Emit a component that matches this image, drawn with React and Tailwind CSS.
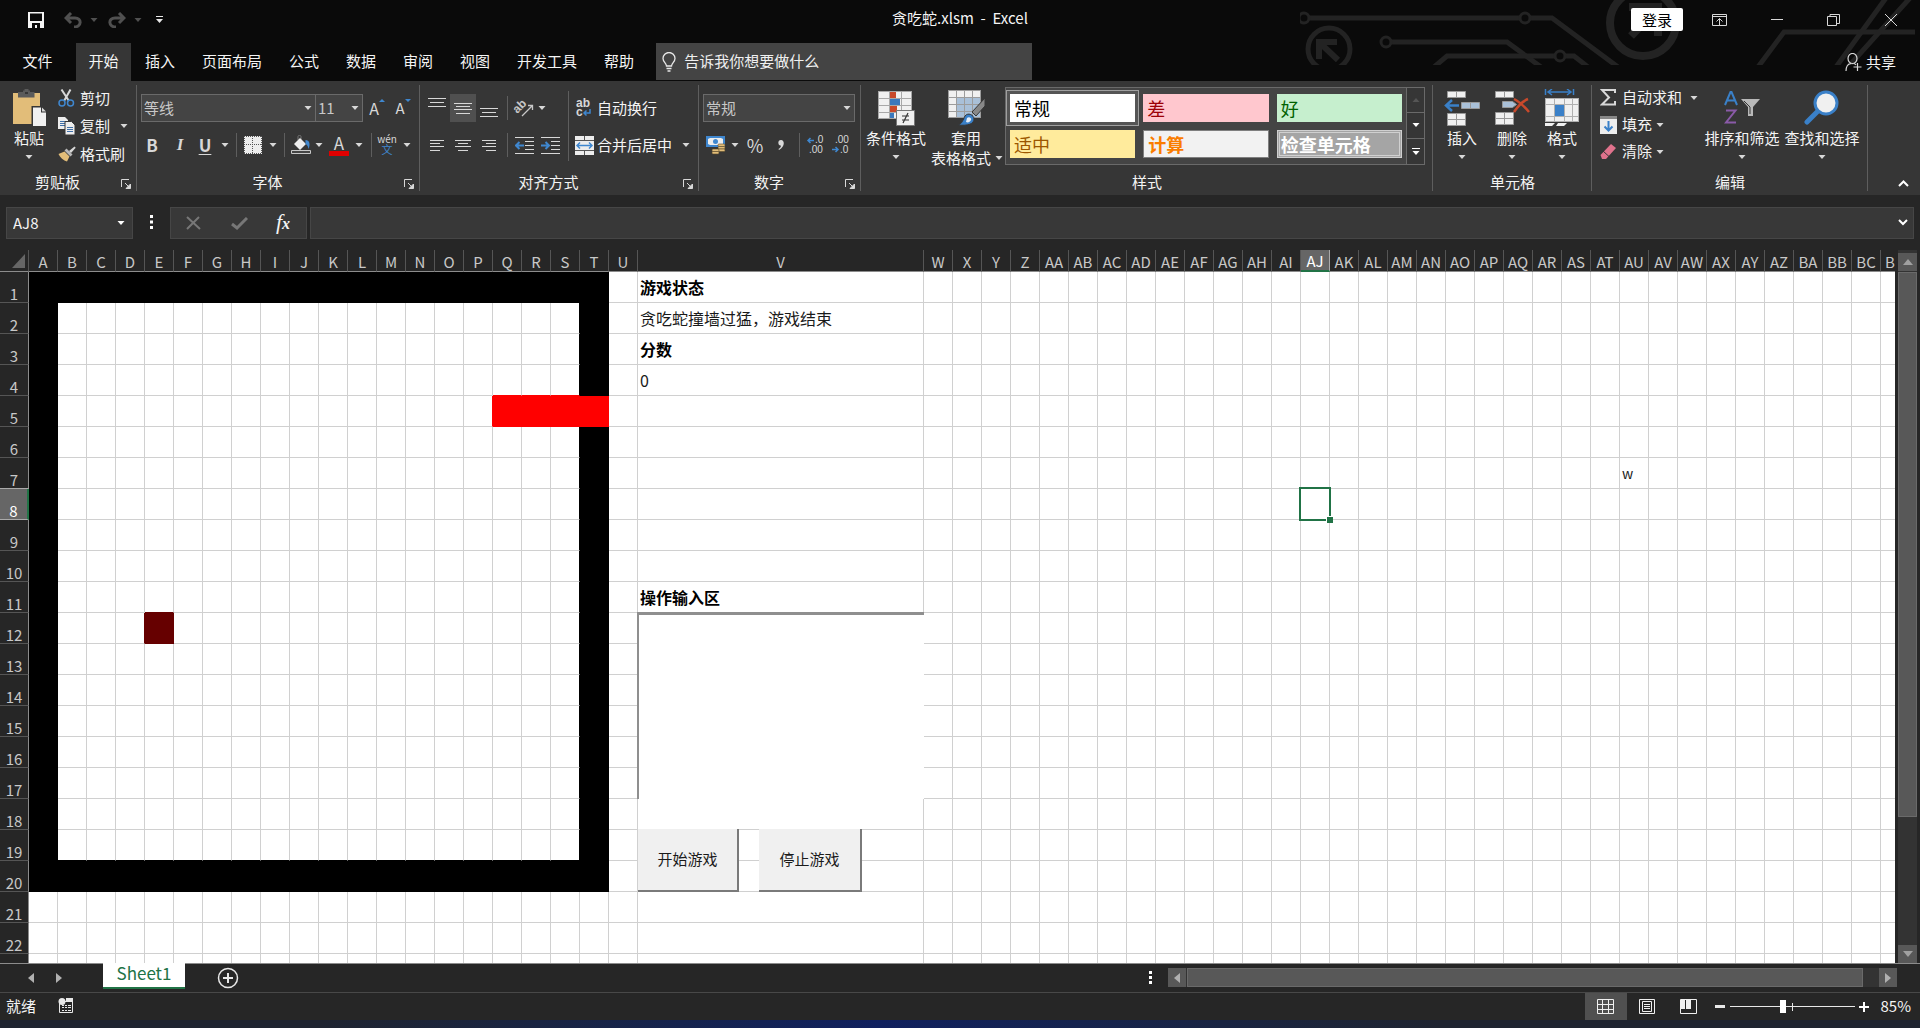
import clsx from 'clsx';

const colName = (i) => (i < 26 ? '' : String.fromCharCode(64 + Math.floor(i / 26))) + String.fromCharCode(65 + (i % 26));
const COLS = Array.from({ length: 56 }, (_, i) => colName(i));
const ROWS = Array.from({ length: 23 }, (_, i) => i + 1);

const TABS = ['插入', '页面布局', '公式', '数据', '审阅', '视图', '开发工具', '帮助'];

const CELLS = {
  V1: { text: '游戏状态', bold: true },
  V2: { text: '贪吃蛇撞墙过猛，游戏结束' },
  V3: { text: '分数', bold: true },
  V4: { text: '0' },
  V11: { text: '操作输入区', bold: true },
  AU7: { text: 'w' },
};

// what the game has painted in a cell: snake, food, wall or nothing
function fillOf(c, r) {
  if (r === 5 && c >= 16 && c <= 19) return 'snake';
  if (r === 12 && c === 4) return 'food';
  if (c <= 19 && r <= 20 && (c === 0 || c === 19 || r === 1 || r === 20)) return 'wall';
  return 'none';
}

const BG = { snake: 'bg-[#ff0000]', food: 'bg-[#660000]', wall: 'bg-black', none: '' };
const RIGHT = { snake: 'border-r-[#ff0000]', food: 'border-r-[#660000]', wall: 'border-r-black', none: 'border-r-[#d0d0d0]' };
const BOTTOM = { snake: 'border-b-[#ff0000]', food: 'border-b-[#660000]', wall: 'border-b-black', none: 'border-b-[#d0d0d0]' };

function edge(a, b) {
  return a !== 'none' ? a : b;
}

/* ---------- small parts ---------- */

function Arrow({ className = 'text-[#d8d8d8]' }) {
  return (
    <svg width="8" height="4" viewBox="0 0 8 4" className={clsx('shrink-0', className)}>
      <path d="M0.5 0h7L4 4z" fill="currentColor" />
    </svg>
  );
}

function IconButton({ label, className, children }) {
  return (
    <button aria-label={label} className={clsx('flex h-7 shrink-0 items-center justify-center', className)}>
      {children}
    </button>
  );
}

function Drop({ label, className = 'w-3' }) {
  return (
    <IconButton label={label} className={className}>
      <Arrow />
    </IconButton>
  );
}

function Sep({ className }) {
  return (
    <div className={clsx('flex h-6 shrink-0 justify-center', className)}>
      <div className="w-px bg-[#5e5e5e]" />
    </div>
  );
}

function Group({ title, launcher, className, children }) {
  return (
    <section className={clsx('relative flex shrink-0 flex-col', className)}>
      <div className="flex h-[90px]">{children}</div>
      <div className="flex h-[22px] items-center">
        <h2 className="flex-1 text-center text-[15px] leading-5">{title}</h2>
        {launcher && (
          <button aria-label={title + '设置'} className="flex w-[22px] justify-center pt-1">
            <svg width="10" height="10" viewBox="0 0 10 10" fill="none" stroke="#d8d8d8">
              <path d="M0.5 8V0.5H8M4 4l4 4" />
              <path d="M9.5 5v4.5H5z" fill="#d8d8d8" />
            </svg>
          </button>
        )}
      </div>
      <div className="absolute top-1 right-0 bottom-1 w-px bg-[#5e5e5e]" />
    </section>
  );
}

function Combo({ label, value, className }) {
  return (
    <div className={clsx('relative h-7', className)}>
      <select aria-label={label} className="h-full w-full appearance-none border border-[#6a6a6a] bg-[#444] pl-0.5 text-[15px] text-[#c8c8c8]">
        <option>{value}</option>
      </select>
      <div className="pointer-events-none absolute inset-y-0 right-1 flex items-center">
        <Arrow />
      </div>
    </div>
  );
}

function BigButton({ icon, text, className }) {
  return (
    <button className={clsx('flex flex-col items-center pt-2', className)}>
      <span className="flex h-[38px] items-center">{icon}</span>
      <span className="mt-px text-[15px] leading-5 whitespace-nowrap">{text}</span>
      <span className="mt-[7px]">
        <Arrow />
      </span>
    </button>
  );
}

function SmallButton({ icon, text, arrow, arrowClass = 'ml-1', className = 'h-7' }) {
  return (
    <button className={clsx('flex items-center text-[15px] whitespace-nowrap', className)}>
      <span className="flex w-[22px] shrink-0">{icon}</span>
      {text}
      {arrow && (
        <span className={arrowClass}>
          <Arrow />
        </span>
      )}
    </button>
  );
}

/* ---------- icons ---------- */

function Lines({ rows, w = 18, className }) {
  return (
    <svg width={w} height="17" viewBox={`0 0 ${w} 17`} stroke="#d8d8d8" className={className}>
      {rows.map(([x1, x2, y]) => (
        <path key={y} d={`M${x1} ${y}.5H${x2}`} />
      ))}
    </svg>
  );
}

function IndentIcon({ flip }) {
  return (
    <svg width="19" height="17" viewBox="0 0 19 17" stroke="#d8d8d8" fill="none">
      <path d="M0 0.5h19M10 4.5h9M10 8.5h9M10 12.5h9M0 16.5h19" />
      <path d={flip ? 'M0 8.5h8M4.5 5l3.5 3.5L4.5 12' : 'M9 8.5H1M4.5 5L1 8.5 4.5 12'} stroke="#3f87cf" strokeWidth="2" />
    </svg>
  );
}

const PasteIcon = (
  <svg width="35" height="38" viewBox="0 0 35 38">
    <path d="M1 4h27v31H1z" fill="#e2bd79" />
    <path d="M6 3h5V1.500h1.500V0h4v1.500H18V3h4.500v5.500H6z" fill="#5b5b5b" />
    <path d="M13 3h3v2h-3z" fill="#363636" />
    <path d="M19.500 17h10l6 6v15h-16z" fill="#363636" />
    <path d="M21 18.500h8v5h5V37H21z" fill="#f0f0f0" />
    <path d="M30 18.500l4 4h-4z" fill="#d8d8d8" />
  </svg>
);

const CutIcon = (
  <svg width="17" height="18" viewBox="0 0 17 18" fill="none">
    <path d="M3.500 0.500L11 12M12.500 0.500L6 12" stroke="#d8d8d8" strokeWidth="2" />
    <circle cx="4" cy="14" r="3" stroke="#3f87cf" strokeWidth="1.500" />
    <circle cx="12.500" cy="14" r="3" stroke="#3f87cf" strokeWidth="1.500" />
  </svg>
);

const CopyIcon = (
  <svg width="17" height="18" viewBox="0 0 17 18">
    <path d="M0 0h7l3 3v9H0z" fill="#ededed" />
    <path d="M2 4.500h5M2 6.500h5M2 8.500h5" stroke="#3f6fa8" />
    <path d="M7 4.500h6.500l3.500 3.500v10H7z" fill="#ededed" stroke="#363636" />
    <path d="M9 10.500h6M9 12.500h6M9 14.500h6" stroke="#3f6fa8" />
  </svg>
);

const BrushIcon = (
  <svg width="18" height="16" viewBox="0 0 18 16">
    <path d="M0.500 8l6-2.500 5 5L9 15.500C5.500 14.500 2 11.500 0.500 8z" fill="#e2bd79" />
    <path d="M6.500 4.500l2-2 6 6-2 2z" fill="#b8b8b8" />
    <path d="M11 5l5.500-4.500 1.200 1.200L13 7z" fill="#d8d8d8" />
  </svg>
);

const FillIcon = (
  <svg width="22" height="20" viewBox="0 0 22 20">
    <path d="M8 5V1.500c0-1.500 3-1.500 3 0V6" fill="none" stroke="#777" />
    <path d="M10 3l6 6-6 6-6-6z" fill="#ededed" />
    <path d="M15.500 5c4 0 5 4 3 9-.5-3-1.500-4-3-5z" fill="#3f87cf" />
    <path d="M1.500 15.500h19v3h-19z" fill="#444" stroke="#c8c8c8" />
  </svg>
);

const BordersIcon = (
  <svg width="18" height="18" viewBox="0 0 18 18">
    <path d="M0 0h18v18H0z" fill="#ededed" />
    <path d="M0 8.500h18M8.500 0v18M0 0.500h18M0.500 0v18M17.500 0v18M0 17.500h18" stroke="#555" strokeDasharray="1 1" />
  </svg>
);

const OrientIcon = (
  <svg width="20" height="18" viewBox="0 0 20 18" className="overflow-visible">
    <text x="-1" y="11" transform="rotate(-45 6 8)" fontSize="12" fontWeight="bold" fontFamily="Liberation Sans, sans-serif" fill="#c8c8c8">ab</text>
    <path d="M8 17L18 7M14 6.500h4.500V11" stroke="#c8c8c8" fill="none" strokeWidth="1.300" />
  </svg>
);

const WrapIcon = (
  <svg width="17" height="18" viewBox="0 0 17 18" className="overflow-visible" fontFamily="Liberation Sans, sans-serif" fontSize="12" fontWeight="bold">
    <text x="1" y="8" fill="#d8d8d8">ab</text>
    <text x="1" y="17" fill="#d8d8d8">c</text>
    <path d="M15 10v4H9M11.500 11.500L9 14l2.500 2.500" stroke="#3f87cf" strokeWidth="1.500" fill="none" />
  </svg>
);

const MergeIcon = (
  <svg width="19" height="19" viewBox="0 0 19 19">
    <path d="M0 0h19v19H0z" fill="#ededed" />
    <path d="M0 4.500h19M0 14.500h19M9.500 0v4M9.500 15v4" stroke="#555" />
    <path d="M2 9.500h15M5 6.500l-3 3 3 3M14 6.500l3 3-3 3" stroke="#3f87cf" strokeWidth="1.500" fill="none" />
  </svg>
);

const MoneyIcon = (
  <svg width="20" height="19" viewBox="0 0 20 19">
    <path d="M0 0h19v11H0z" fill="#3f87cf" />
    <path d="M2 3l2-1h11l2 1v5l-2 1H4L2 8z" fill="#ededed" />
    <circle cx="9.500" cy="5.500" r="2.500" fill="#3f87cf" />
    <g fill="#e2bd79" stroke="#5a4a2a" strokeWidth="0.600">
      <rect x="12" y="8" width="7" height="2.500" rx="1" />
      <rect x="12" y="10.500" width="7" height="2.500" rx="1" />
      <rect x="12" y="13" width="7" height="2.500" rx="1" />
      <rect x="6" y="13" width="7" height="2.500" rx="1" />
      <rect x="6" y="15.500" width="7" height="2.500" rx="1" />
    </g>
  </svg>
);

function DecimalIcon({ inc }) {
  return (
    <svg width="18" height="18" viewBox="0 0 18 18" className="overflow-visible" fontFamily="Liberation Sans, sans-serif" fontSize="10" fill="#d8d8d8">
      <text x={inc ? 8 : 3} y="7">{inc ? '.0' : '.00'}</text>
      <text x={inc ? 2 : 8} y="17">{inc ? '.00' : '.0'}</text>
      <path d={inc ? 'M7 4.500H1M3.500 2L1 4.500 3.500 7' : 'M0 13.500h6M3.500 11L6 13.500 3.500 16'} stroke="#3f87cf" strokeWidth="1.500" fill="none" />
    </svg>
  );
}

const CondIcon = (
  <svg width="37" height="35" viewBox="0 0 37 35">
    <path d="M0 0h34v28H0z" fill="#f0f0f0" />
    <path d="M11 0h7v7h-7zM11 14h8v7h-8z" fill="#c8492b" />
    <path d="M11 7h11v7H11zM11 21h5v7h-5z" fill="#3a78bd" />
    <path d="M0 7.500h34M0 14.500h34M0 21.500h34M11.500 0v28M23.500 0v28M0.500 0v28M33.500 0v28M0 0.500h34M0 27.500h34" stroke="#a8a8a8" fill="none" />
    <path d="M18.500 19.500h18v15h-18z" fill="#f0f0f0" stroke="#777" />
    <path d="M24 25h7M24 29h7M30 22l-5 10" stroke="#333" strokeWidth="1.200" />
  </svg>
);

const TableStyleIcon = (
  <svg width="38" height="36" viewBox="0 0 38 36">
    <path d="M0 0h33v28H0z" fill="#f0f0f0" />
    <path d="M9 7h24v21H9z" fill="#a9c0d8" />
    <path d="M0 7.500h33M0 14.500h33M0 21.500h33M8.500 0v28M16.500 0v28M24.500 0v28M0.500 0v28M32.500 0v28M0 0.500h33M0 27.500h33" stroke="#9c9c9c" fill="none" />
    <path d="M37 8v8l-9 10-4-4z" fill="#888" stroke="#363636" />
    <path d="M10 35c4-1 5-5 7-9 3-4 9-1 9 3 0 5-6 7-16 6z" fill="#3a80c8" stroke="#363636" />
    <path d="M19 28c2-2 5 0 4 2s-3 3-5 2z" fill="#e6eef8" />
  </svg>
);

const InsertCellsIcon = (
  <svg width="36" height="36" viewBox="0 0 36 36" stroke="#999">
    <path d="M3.500 1.500h18v6h-18zM12.500 1.500v6" fill="#f0f0f0" />
    <path d="M17.500 12.500h18v6h-18zM26.500 12.500v6" fill="#a9c0d8" />
    <path d="M3.500 23.500h18v12h-18zM12.500 23.500v12M3.500 29.500h18" fill="#f0f0f0" />
    <path d="M15 15.500H2M8 10l-6 5.500L8 21" stroke="#3a80c8" strokeWidth="2.500" fill="none" />
  </svg>
);

const DeleteCellsIcon = (
  <svg width="36" height="36" viewBox="0 0 36 36" stroke="#999">
    <path d="M1.500 1.500h18v6h-18zM10.500 1.500v6" fill="#f0f0f0" />
    <path d="M8.500 11.500h10l4 3-4 3h-10z" fill="#a9c0d8" />
    <path d="M1.500 22.500h18v12h-18zM10.500 22.500v12M1.500 28.500h18" fill="#f0f0f0" />
    <path d="M20 9c4 2 9 6 15 13M34 9c-5 2-10 7-14 13" stroke="#c8492b" strokeWidth="2.500" fill="none" />
  </svg>
);

const FormatCellsIcon = (
  <svg width="36" height="38" viewBox="0 0 36 38">
    <path d="M1.500 0v6M29.500 0v6M4 3h23M8 0L4 3l4 3M23 0l4 3-4 3" stroke="#3a80c8" strokeWidth="1.500" fill="none" />
    <path d="M1 9h34v24H1z" fill="#f0f0f0" />
    <path d="M10 15h10v12H10z" fill="#3a80c8" />
    <path d="M1 15.500h34M1 27.500h34M10.500 9v24M20.500 9v24M28.500 9v24M1.500 9v24M34.500 9v24M1 9.500h34M1 32.500h34" stroke="#b0b0b0" fill="none" />
    <path d="M1 34h10l-3 3H1zM14 34h9l-3 3h-8z" fill="#f0f0f0" />
  </svg>
);

const SigmaIcon = (
  <svg width="16" height="17" viewBox="0 0 16 17" fill="none" stroke="#d8d8d8" strokeWidth="2">
    <path d="M15 4V1H2l7 7.500L2 15.500h13V12" />
  </svg>
);

const FillDownIcon = (
  <svg width="17" height="18" viewBox="0 0 17 18">
    <path d="M0 0h17v18H0z" fill="#ededed" />
    <path d="M0 0h17v3H0z" fill="#888" />
    <path d="M8.500 5v9M4.500 10.500l4 4 4-4" stroke="#3a80c8" strokeWidth="2" fill="none" />
  </svg>
);

const EraserIcon = (
  <svg width="17" height="17" viewBox="0 0 17 17">
    <path d="M0.500 12L11 1l5 4L6 16H2z" fill="#e0728c" />
    <path d="M3 8l6 5.500" stroke="#363636" />
  </svg>
);

const SortIcon = (
  <svg width="36" height="34" viewBox="0 0 36 34">
    <path d="M1 14L6.500 1h1L13 14M3 9.500h8" stroke="#3a80c8" strokeWidth="2" fill="none" />
    <path d="M2 19.500h9.500L2 31.500h10" stroke="#8a5aa8" strokeWidth="2" fill="none" />
    <path d="M17 8h19l-7 8v9h-5v-9z" fill="#b8b8b8" />
    <path d="M20 10l6 6v7" stroke="#363636" fill="none" />
  </svg>
);

const FindIcon = (
  <svg width="36" height="36" viewBox="0 0 36 36">
    <path d="M15 20L3 32" stroke="#3a80c8" strokeWidth="5" strokeLinecap="round" />
    <circle cx="22" cy="13" r="11" fill="#f0f0f0" stroke="#3a80c8" strokeWidth="3" />
  </svg>
);

/* ---------- title bar and tabs ---------- */

function Circuit() {
  return (
    <svg width="620" height="65" viewBox="1300 0 620 65" fill="none" stroke="#232323" strokeWidth="5" className="absolute top-0 right-0">
      <path d="M1309 18h211M1530 18h22l66 49" />
      <circle cx="1304" cy="18" r="5" strokeWidth="3" />
      <circle cx="1525" cy="18" r="5" strokeWidth="3" />
      <path d="M1391 42h116l34 25" />
      <circle cx="1386" cy="42" r="5" strokeWidth="3" />
      <path d="M1434 67l13-11h109M1565 56h9l14 11" />
      <circle cx="1560" cy="56" r="5" strokeWidth="3" />
      <circle cx="1329" cy="49" r="21" />
      <path d="M1319 59V42h18M1320 43l18 17" strokeWidth="6" />
      <circle cx="1643" cy="23" r="33" strokeWidth="8" />
      <path d="M1629 7h29v29M1657 9l-26 27" strokeWidth="8" />
      <path d="M1758 67l26-35h131" />
      <path d="M1836 67l50-69M1848 67l62-69" />
    </svg>
  );
}

function TitleBar() {
  return (
    <header className="relative grid h-[43px] grid-cols-[1fr_auto_1fr] pb-2">
      <div className="flex items-center pt-1 pl-7">
        <button aria-label="保存">
          <svg width="16" height="16" viewBox="0 0 16 16">
            <path d="M0 0h16v16H0z" fill="#f4f4f4" />
            <path d="M2 1.500h12V9H2zM4 11h8v5H9v-3H7v3H4z" fill="#0a0a0a" />
          </svg>
        </button>
        <button aria-label="撤消" className="ml-5 flex items-center gap-2 text-[#505050]">
          <svg width="18" height="16" viewBox="0 0 18 16" fill="none" stroke="currentColor" strokeWidth="3">
            <path d="M2 6h9c7 0 7 9-1 9M7 1L2 6l5 5" />
          </svg>
          <Arrow className="text-[#505050]" />
        </button>
        <button aria-label="恢复" className="ml-2.5 flex items-center gap-2 text-[#505050]">
          <svg width="18" height="16" viewBox="0 0 18 16" fill="none" stroke="currentColor" strokeWidth="3">
            <path d="M16 6H7c-7 0-7 9 1 9M11 1l5 5-5 5" />
          </svg>
          <Arrow className="text-[#505050]" />
        </button>
        <button aria-label="自定义快速访问工具栏" className="ml-3.5">
          <svg width="7" height="7" viewBox="0 0 7 7" fill="#e8e8e8">
            <path d="M0 0h7v1H0zM0 3h7L3.500 7z" />
          </svg>
        </button>
      </div>
      <h1 className="self-center text-[15px] leading-6 whitespace-pre">贪吃蛇.xlsm  -  Excel</h1>
      <div className="flex items-center justify-end pt-1 pr-px text-[#d8d8d8]">
        <button className="mr-2 h-[23px] w-[52px] rounded-xs bg-white text-[15px] leading-[22px] text-black">登录</button>
        <button aria-label="功能区显示选项" className="flex w-[57px] justify-center">
          <svg width="15" height="12" viewBox="0 0 15 12" fill="none" stroke="currentColor">
            <path d="M0.500 0.500h14v11H0.500zM0 2.500h15M7.500 11V4.500M4.500 7.500l3-3 3 3" />
          </svg>
        </button>
        <button aria-label="最小化" className="flex w-[57px] justify-center">
          <svg width="12" height="2" viewBox="0 0 12 2"><path d="M0 0.500h12" stroke="currentColor" /></svg>
        </button>
        <button aria-label="向下还原" className="flex w-[57px] justify-center">
          <svg width="13" height="12" viewBox="0 0 13 12" fill="none" stroke="currentColor">
            <path d="M0.500 2.500h9v9h-9zM3 2V0.500h9.500v9H10" />
          </svg>
        </button>
        <button aria-label="关闭" className="flex w-[57px] justify-center">
          <svg width="12" height="12" viewBox="0 0 12 12" stroke="currentColor"><path d="M0 0l12 12M12 0L0 12" /></svg>
        </button>
      </div>
    </header>
  );
}

function Tabs() {
  return (
    <nav className="relative flex h-[38px] items-stretch gap-px text-[15px]">
      <button className="w-[75px] pb-0.5">文件</button>
      <button className="w-[55px] bg-[#363636] pb-0.5">开始</button>
      {TABS.map((t) => (
        <button key={t} className="px-[13px] pb-0.5">{t}</button>
      ))}
      <label className="ml-2 mb-px flex w-[376px] items-center gap-2 bg-[#444] pl-1.5">
        <svg width="14" height="20" viewBox="0 0 14 20" fill="none" stroke="#e8e8e8" strokeWidth="1.300">
          <path d="M4.500 14c0-3-3.500-4-3.500-7.500a6 6 0 0 1 12 0C13 10 9.500 11 9.500 14zM4.500 16.500h5M5.500 19h3" />
        </svg>
        <input aria-label="告诉我你想要做什么" placeholder="告诉我你想要做什么" className="min-w-0 flex-1 placeholder:text-[#f0f0f0]" />
      </label>
      <button className="ml-auto flex items-center gap-1 pr-6">
        <svg width="17" height="19" viewBox="0 0 17 19" fill="none" stroke="#d8d8d8" strokeWidth="1.200">
          <ellipse cx="7.500" cy="5.500" rx="4.500" ry="5" />
          <path d="M1 18c0-4 2-7 5-7.500M9 10.500c1 .3 1.500.7 2 1.500M12.500 10v8M8.500 14h8" />
        </svg>
        共享
      </button>
    </nav>
  );
}

/* ---------- ribbon ---------- */

const STYLES = [
  { name: '常规', className: 'bg-white px-1 text-black', selected: true },
  { name: '差', className: 'bg-[#ffc7ce] px-1 text-[#9c0006]' },
  { name: '好', className: 'bg-[#c6efce] px-1 text-[#006100]' },
  { name: '适中', className: 'bg-[#ffeb9c] px-1 text-[#9c5700]' },
  { name: '计算', className: 'border border-[#7f7f7f] bg-[#f2f2f2] px-1 font-bold text-[#fa7d00]' },
  { name: '检查单元格', className: 'border-3 border-double border-[#d0d0d0] bg-[#a5a5a5] px-px font-bold text-white' },
];

function Ribbon() {
  return (
    <div className="flex h-[114px] bg-[#363636]">
      <Group title="剪贴板" launcher className="w-[137px]">
        <BigButton icon={PasteIcon} text="粘贴" className="w-[58px]" />
        <div className="flex flex-col items-start pt-[3px]">
          <SmallButton icon={CutIcon} text="剪切" />
          <SmallButton icon={CopyIcon} text="复制" arrow arrowClass="ml-2.5" />
          <SmallButton icon={BrushIcon} text="格式刷" />
        </div>
      </Group>

      <Group title="字体" launcher className="w-[283px]">
        <div className="flex flex-col gap-[9px] pt-[13px]">
          <div className="flex pl-1">
            <Combo label="字体名称" value="等线" className="w-[175px]" />
            <Combo label="字号" value="11" className="-ml-px w-12" />
            <IconButton label="增大字号" className="w-7 text-[16px] text-[#d8d8d8]">
              A<svg width="6" height="3" viewBox="0 0 6 3" className="mb-4"><path d="M0 3l3-3 3 3z" fill="#3f87cf" /></svg>
            </IconButton>
            <IconButton label="减小字号" className="w-6 text-[15px] text-[#d8d8d8]">
              A<svg width="6" height="3" viewBox="0 0 6 3" className="mb-4"><path d="M0 0h6L3 3z" fill="#3f87cf" /></svg>
            </IconButton>
          </div>
          <div className="flex items-center pl-px text-[17px] text-[#d8d8d8]">
            <IconButton label="加粗" className="w-7 font-bold">B</IconButton>
            <IconButton label="倾斜" className="w-7 font-['Liberation_Serif',serif] font-bold italic">I</IconButton>
            <IconButton label="下划线" className="w-[22px] font-bold underline underline-offset-2">U</IconButton>
            <Drop label="下划线选项" className="w-[18px]" />
            <Sep className="w-1" />
            <IconButton label="边框" className="w-[29px]">{BordersIcon}</IconButton>
            <Drop label="边框选项" />
            <Sep className="w-2.5" />
            <IconButton label="填充颜色" className="w-6">{FillIcon}</IconButton>
            <Drop label="填充颜色选项" />
            <IconButton label="字体颜色" className="w-7 flex-col leading-4">
              A
              <span className="h-[5px] w-5 bg-[#e00000]" />
            </IconButton>
            <Drop label="字体颜色选项" />
            <Sep className="w-3" />
            <IconButton label="显示拼音" className="w-5 flex-col">
              <span className="text-[10px] leading-[8px]">wén</span>
              <span className="text-[11px] leading-[12px] text-[#3f87cf]">文</span>
            </IconButton>
            <Drop label="拼音选项" className="w-5" />
          </div>
        </div>
      </Group>

      <Group title="对齐方式" launcher className="w-[279px]">
        <div className="flex w-[148px] flex-col gap-[9px] pt-[13px] pl-1">
          <div className="flex items-center">
            <IconButton label="顶端对齐" className="w-[26px]"><Lines rows={[[0, 18, 2], [2, 16, 6], [0, 18, 10]]} className="mb-2" /></IconButton>
            <IconButton label="垂直居中" className="w-[26px] bg-[#505050]"><Lines rows={[[0, 18, 3], [2, 16, 6], [0, 18, 9], [2, 16, 13]]} /></IconButton>
            <IconButton label="底端对齐" className="w-[26px]"><Lines rows={[[0, 18, 6], [2, 16, 10], [0, 18, 14]]} className="mt-1" /></IconButton>
            <Sep className="w-2.5" />
            <IconButton label="方向" className="w-6">{OrientIcon}</IconButton>
            <Drop label="方向选项" />
          </div>
          <div className="flex items-center">
            <IconButton label="左对齐" className="w-[26px]"><Lines w={14} rows={[[0, 14, 3], [0, 10, 6], [0, 14, 9], [0, 10, 13]]} /></IconButton>
            <IconButton label="居中" className="w-[26px]"><Lines w={16} rows={[[0, 16, 3], [3, 13, 6], [0, 16, 9], [3, 13, 13]]} /></IconButton>
            <IconButton label="右对齐" className="w-[26px]"><Lines w={14} rows={[[0, 14, 3], [4, 14, 6], [0, 14, 9], [4, 14, 13]]} /></IconButton>
            <Sep className="w-2.5" />
            <IconButton label="减少缩进量" className="w-6"><IndentIcon /></IconButton>
            <IconButton label="增加缩进量" className="w-7"><IndentIcon flip /></IconButton>
          </div>
        </div>
        <div className="mt-2.5 h-[70px] w-px bg-[#5e5e5e]" />
        <div className="flex flex-col items-start gap-[9px] pt-[13px] pl-1.5">
          <SmallButton icon={WrapIcon} text="自动换行" />
          <SmallButton icon={MergeIcon} text="合并后居中" arrow arrowClass="ml-2.5" />
        </div>
      </Group>

      <Group title="数字" launcher className="w-[162px]">
        <div className="flex flex-col gap-[9px] pt-[13px] pl-1">
          <Combo label="数字格式" value="常规" className="w-[152px]" />
          <div className="flex items-center text-[#d8d8d8]">
            <IconButton label="会计数字格式" className="w-[26px]">{MoneyIcon}</IconButton>
            <Drop label="会计格式选项" />
            <IconButton label="百分比样式" className="w-7 text-[18px]">%</IconButton>
            <IconButton label="千位分隔样式" className="w-6">
              <svg width="6" height="10" viewBox="0 0 6 10"><path d="M3 0c4 0 4 7-2 10l-.5-1C2.500 8 3 6.500 2.800 5.500 0 6-1 0 3 0z" fill="#d8d8d8" /></svg>
            </IconButton>
            <Sep className="w-3" />
            <IconButton label="增加小数位数" className="w-[22px]"><DecimalIcon inc /></IconButton>
            <IconButton label="减少小数位数" className="w-7"><DecimalIcon /></IconButton>
          </div>
        </div>
      </Group>

      <Group title="样式" className="w-[572px]">
        <BigButton icon={CondIcon} text="条件格式" className="w-[70px]" />
        <button className="flex w-[74px] flex-col pt-2 text-[15px] leading-5">
          <span className="flex h-[38px] w-[72px] items-center justify-center">{TableStyleIcon}</span>
          <span className="mt-px w-[70px]">套用</span>
          <span className="flex items-center gap-1 whitespace-nowrap">表格格式<Arrow /></span>
        </button>
        <div className="mt-1.5 flex h-[78px] w-[420px] border border-[#6a6a6a] bg-[#444]">
          <div className="grid flex-1 grid-cols-3 grid-rows-[36px_36px] pt-0.5">
            {STYLES.map((s) => (
              <button key={s.name} className={clsx(s.selected ? 'border border-[#a0a0a0] bg-[#555] p-[3px]' : 'p-1')}>
                <span className={clsx('flex h-7 items-center text-[18px] leading-5', s.className)}>{s.name}</span>
              </button>
            ))}
          </div>
          <div className="grid w-[18px] grid-rows-3 divide-y divide-[#6a6a6a] border-l border-[#6a6a6a] bg-[#363636]">
            <button aria-label="上一行" className="flex items-center justify-center">
              <Arrow className="rotate-180 text-[#555]" />
            </button>
            <button aria-label="下一行" className="flex items-center justify-center"><Arrow className="text-white" /></button>
            <button aria-label="其他样式" className="flex flex-col items-center justify-center gap-0.5">
              <span className="h-px w-2 bg-white" />
              <Arrow className="text-white" />
            </button>
          </div>
        </div>
      </Group>

      <Group title="单元格" className="w-[159px]">
        <div className="flex pl-1">
          <BigButton icon={InsertCellsIcon} text="插入" className="w-[50px]" />
          <BigButton icon={DeleteCellsIcon} text="删除" className="w-[50px]" />
          <BigButton icon={FormatCellsIcon} text="格式" className="w-[50px]" />
        </div>
      </Group>

      <Group title="编辑" className="w-[276px]">
        <div className="flex w-[110px] flex-col items-start pt-[3px] pl-2">
          <SmallButton icon={SigmaIcon} text="自动求和" arrow arrowClass="ml-2" className="h-[27px]" />
          <SmallButton icon={FillDownIcon} text="填充" arrow className="h-[27px]" />
          <SmallButton icon={EraserIcon} text="清除" arrow className="h-[27px]" />
        </div>
        <BigButton icon={SortIcon} text="排序和筛选" className="w-20" />
        <BigButton icon={FindIcon} text="查找和选择" className="w-20" />
      </Group>

      <button aria-label="折叠功能区" className="mt-auto mr-[11px] mb-2 ml-auto">
        <svg width="11" height="7" viewBox="0 0 11 7" fill="none" stroke="#fff" strokeWidth="2"><path d="M1 6l4.500-4.500L10 6" /></svg>
      </button>
    </div>
  );
}

function FormulaBar() {
  return (
    <div className="flex h-[55px] items-start pt-3 pr-1.5 pl-1.5">
      <div className="relative">
        <input aria-label="名称框" defaultValue="AJ8" className="h-8 w-[127px] border border-[#464646] bg-[#383838] pb-0.5 pl-1.5 text-[15px]" />
        <Arrow className="pointer-events-none absolute top-3.5 right-2 text-white" />
      </div>
      <svg width="3" height="14" viewBox="0 0 3 14" className="mx-[17px] mt-2" fill="#fff">
        <path d="M0 0h3v3H0zM0 5.500h3v3H0zM0 11h3v3H0z" />
      </svg>
      <div className="flex h-8 w-[137px] items-center border border-[#464646] bg-[#383838]">
        <button aria-label="取消" className="flex w-11 justify-center">
          <svg width="15" height="14" viewBox="0 0 15 14" stroke="#777" strokeWidth="2"><path d="M1 1l13 12M13 1L1 13" /></svg>
        </button>
        <button aria-label="输入" className="flex w-12 justify-center">
          <svg width="17" height="13" viewBox="0 0 17 13" fill="none" stroke="#777" strokeWidth="3"><path d="M1 7l5 4L16 1" /></svg>
        </button>
        <button aria-label="插入函数" className="w-10 font-['Liberation_Serif',serif] text-[22px] leading-6 italic">
          f<span className="text-[16px] font-bold">x</span>
        </button>
      </div>
      <div className="relative ml-[3px] flex-1">
        <input aria-label="编辑栏" className="h-8 w-full border border-[#464646] bg-[#383838] px-2 text-[15px]" />
        <svg width="10" height="7" viewBox="0 0 10 7" fill="none" stroke="#fff" strokeWidth="2" className="pointer-events-none absolute top-3 right-1.5">
          <path d="M1 1l4 4 4-4" />
        </svg>
      </div>
    </div>
  );
}

/* ---------- sheet ---------- */

function Cell({ c, r }) {
  const id = COLS[c] + r;
  const fill = fillOf(c, r);
  const cell = CELLS[id];
  return (
    <td
      className={clsx(
        'h-[31px] border-r border-b p-0 text-[#1a1a1a]',
        BG[fill],
        RIGHT[edge(fill, fillOf(c + 1, r))],
        BOTTOM[edge(fill, fillOf(c, r + 1))],
        id === 'AJ8' && 'relative',
      )}
    >
      {cell && (
        <div className={clsx('pl-0.5 leading-5 whitespace-nowrap', cell.bold ? 'font-bold text-black' : '', id === 'AU7' ? 'text-[14px]' : 'text-[16px]')}>{cell.text}</div>
      )}
      {id === 'AJ8' && (
        <div className="absolute -top-0.5 -right-0.5 -bottom-0.5 -left-0.5 border-2 border-[#217346]">
          <div className="absolute -right-1 -bottom-1 size-[7px] border-t border-l border-white bg-[#217346]" />
        </div>
      )}
    </td>
  );
}

function Sheet() {
  return (
    <div className="relative min-w-0 flex-1 overflow-hidden bg-white">
      <table className="w-max table-fixed border-separate border-spacing-0">
        <colgroup>
          <col className="w-[29px]" />
          {COLS.map((n) => (
            <col key={n} className={n === 'V' ? 'w-[286px]' : 'w-[29px]'} />
          ))}
        </colgroup>
        <thead>
          <tr className="bg-[#262626] text-[15px] text-[#c8c8c8]">
            <th aria-label="全选" className="h-[22px] border-r border-b border-r-[#555] border-b-[#8c8c8c] p-0">
              <svg width="13" height="14" viewBox="0 0 13 14" className="ml-3"><path d="M13 0v14H0z" fill="#666" /></svg>
            </th>
            {COLS.map((n) => (
              <th
                key={n}
                scope="col"
                className={clsx(
                  'h-[22px] p-0 font-normal',
                  n === 'AJ' ? 'border-r border-b-2 border-r-[#aaa] border-b-[#217346] bg-[#666] text-white' : 'border-r border-b border-r-[#555] border-b-[#8c8c8c]',
                )}
              >
                <div className="flex h-5 justify-center leading-[22px]">{n}</div>
              </th>
            ))}
          </tr>
        </thead>
        <tbody>
          {ROWS.map((r) => (
            <tr key={r}>
              <th
                scope="row"
                className={clsx(
                  'h-[31px] border-b p-0 align-bottom text-[15px] font-normal',
                  r === 8 ? 'border-r-2 border-r-[#217346] border-b-[#aaa] bg-[#666] text-white' : 'border-r border-r-[#8c8c8c] bg-[#262626] text-[#c8c8c8]',
                  r === 7 ? 'border-b-[#aaa]' : r !== 8 && 'border-b-[#555]',
                )}
              >
                <div className="leading-4">{r < 23 && r}</div>
              </th>
              {COLS.map((n, c) => (
                <Cell key={n} c={c} r={r} />
              ))}
            </tr>
          ))}
        </tbody>
      </table>

      {/* form controls floating on the sheet */}
      <textarea aria-label="操作输入区" className="absolute top-[362px] left-[637px] h-[187px] w-[287px] resize-none border-t-3 border-l-2 border-[#8f8f8f] bg-white text-black" />
      <button className="absolute top-[579px] left-[638px] h-[63px] w-[101px] border-r-2 border-b-2 border-[#7a7a7a] bg-[#f0f0f0] text-[15px] text-[#1a1a1a]">开始游戏</button>
      <button className="absolute top-[579px] left-[759px] h-[63px] w-[103px] border-r-2 border-b-2 border-[#7a7a7a] bg-[#f0f0f0] text-[15px] text-[#1a1a1a]">停止游戏</button>
    </div>
  );
}

function Tri({ className }) {
  return (
    <svg width="12" height="6" viewBox="0 0 12 6" className={className}>
      <path d="M1 6l5-6 5 6z" fill="#a0a0a0" />
    </svg>
  );
}

function VScroll() {
  return (
    <div className="mx-[3px] flex w-[19px] flex-col bg-[#333] pt-[3px]">
      <button aria-label="向上滚动" className="flex h-[18px] items-center justify-center bg-[#585858]"><Tri /></button>
      <div className="mt-px flex-1"><div className="h-[81%] border border-[#6a6a6a] bg-[#585858]" /></div>
      <button aria-label="向下滚动" className="flex h-[18px] items-center justify-center bg-[#585858]"><Tri className="rotate-180" /></button>
    </div>
  );
}

function SheetTabs() {
  return (
    <div className="flex h-[30px] items-start border-t border-b border-t-[#8c8c8c] border-b-[#484848]">
      <div className="flex h-7 w-[103px] items-center gap-[22px] pl-7">
        <button aria-label="上一张工作表"><svg width="6" height="10" viewBox="0 0 6 10"><path d="M6 0v10L0 5z" fill="#b0b0b0" /></svg></button>
        <button aria-label="下一张工作表"><svg width="6" height="10" viewBox="0 0 6 10"><path d="M0 0v10l6-5z" fill="#b0b0b0" /></svg></button>
      </div>
      <button className="-mt-px h-[26px] w-[82px] border-b-2 border-[#217346] bg-white pb-1 text-[17px] leading-5 text-[#217346]">Sheet1</button>
      <button aria-label="新工作表" className="ml-8 flex h-7 items-center">
        <svg width="22" height="22" viewBox="0 0 22 22" fill="none" stroke="#e8e8e8">
          <circle cx="11" cy="11" r="9.500" strokeWidth="1.500" />
          <path d="M11 6v10M6 11h10" strokeWidth="2" />
        </svg>
      </button>
      <div className="mt-1 ml-auto flex w-[748px] items-center">
        <svg width="3" height="13" viewBox="0 0 3 13" fill="#fff"><path d="M0 0h3v3H0zM0 5h3v3H0zM0 10h3v3H0z" /></svg>
        <div className="ml-4 flex h-[19px] flex-1 bg-[#333]">
          <button aria-label="向左滚动" className="flex w-[18px] items-center justify-center bg-[#585858]"><svg width="6" height="10" viewBox="0 0 6 10"><path d="M6 0v10L0 5z" fill="#b0b0b0" /></svg></button>
          <div className="ml-px flex-1 pr-4"><div className="h-full border border-[#6a6a6a] bg-[#585858]" /></div>
          <button aria-label="向右滚动" className="flex w-[18px] items-center justify-center bg-[#585858]"><svg width="6" height="10" viewBox="0 0 6 10"><path d="M0 0v10l6-5z" fill="#b0b0b0" /></svg></button>
        </div>
      </div>
      <div className="w-[23px]" />
    </div>
  );
}

function StatusBar() {
  return (
    <footer className="flex h-[27px] items-center">
      <span className="ml-1.5 pb-0.5 text-[15px] leading-5">就绪</span>
      <button aria-label="录制宏" className="ml-[22px] pb-0.5">
        <svg width="16" height="15" viewBox="0 0 16 15">
          <path d="M1.500 3.500h13v11h-13z" fill="none" stroke="#e8e8e8" />
          <path d="M8 0h7v4H8z" fill="#e8e8e8" />
          <circle cx="4" cy="3.500" r="3.500" fill="#e8e8e8" />
          <path d="M4 7.500h2M7 7.500h2M10 7.500h3M4 9.500h2M7 9.500h2M10 9.500h3M4 12.500h2M7 12.500h2M10 12.500h3" stroke="#e8e8e8" />
        </svg>
      </button>
      <button aria-label="普通" className="ml-auto flex h-full w-[42px] items-center justify-center bg-[#505050]">
        <svg width="17" height="15" viewBox="0 0 17 15" fill="none" stroke="#f0f0f0"><path d="M0.500 0.500h16v14H0.500zM0 5.500h17M0 10.500h17M5.500 0v15M11.500 0v15" /></svg>
      </button>
      <button aria-label="页面布局" className="flex w-[41px] justify-center">
        <svg width="16" height="15" viewBox="0 0 16 15" fill="none" stroke="#f0f0f0"><path d="M0.500 0.500h15v14H0.500zM3.500 2.500h9v10h-9zM5 5.500h6M5 7.500h6M5 9.500h6" /></svg>
      </button>
      <button aria-label="分页预览" className="flex w-[42px] justify-center">
        <svg width="17" height="15" viewBox="0 0 17 15"><path d="M0.500 0.500h16v14H0.500z" fill="none" stroke="#f0f0f0" /><path d="M1 1h4v9H1zM6 1h5v9H6z" fill="#f0f0f0" /></svg>
      </button>
      <button aria-label="缩小" className="flex w-5 justify-center"><span className="h-[3px] w-2.5 bg-[#e8e8e8]" /></button>
      <div className="relative flex h-5 w-[125px] items-center">
        <input
          type="range"
          aria-label="缩放"
          defaultValue="42"
          className="h-5 w-full appearance-none bg-transparent [&::-webkit-slider-runnable-track]:h-px [&::-webkit-slider-runnable-track]:bg-[#e8e8e8] [&::-webkit-slider-thumb]:-mt-1.5 [&::-webkit-slider-thumb]:h-[13px] [&::-webkit-slider-thumb]:w-1.5 [&::-webkit-slider-thumb]:appearance-none [&::-webkit-slider-thumb]:bg-white"
        />
        <span className="pointer-events-none absolute top-1.5 left-1/2 h-2 w-px bg-[#e8e8e8]" />
      </div>
      <button aria-label="放大" className="flex w-[18px] justify-center">
        <svg width="10" height="10" viewBox="0 0 10 10" stroke="#fff" strokeWidth="2"><path d="M5 0v10M0 5h10" /></svg>
      </button>
      <button className="mr-[9px] ml-2 pb-0.5 text-[15px] leading-5">85%</button>
    </footer>
  );
}

export default function App() {
  return (
    <div className="flex h-screen flex-col overflow-hidden bg-[#262626] font-['Noto_Sans_CJK_SC',sans-serif] text-[#f4f4f4]">
      <div className="relative bg-[#0a0a0a]">
        <Circuit />
        <TitleBar />
        <Tabs />
      </div>
      <Ribbon />
      <FormulaBar />
      <main className="flex min-h-0 flex-1">
        <Sheet />
        <VScroll />
      </main>
      <SheetTabs />
      <StatusBar />
      <div className="flex h-2">
        <div className="w-1/6 bg-[#1f2430]" />
        <div className="flex-1 bg-linear-to-r from-[#1f2430] via-[#10205e] to-[#1f2430]" />
        <div className="w-1/4 bg-[#1f2430]" />
      </div>
    </div>
  );
}
